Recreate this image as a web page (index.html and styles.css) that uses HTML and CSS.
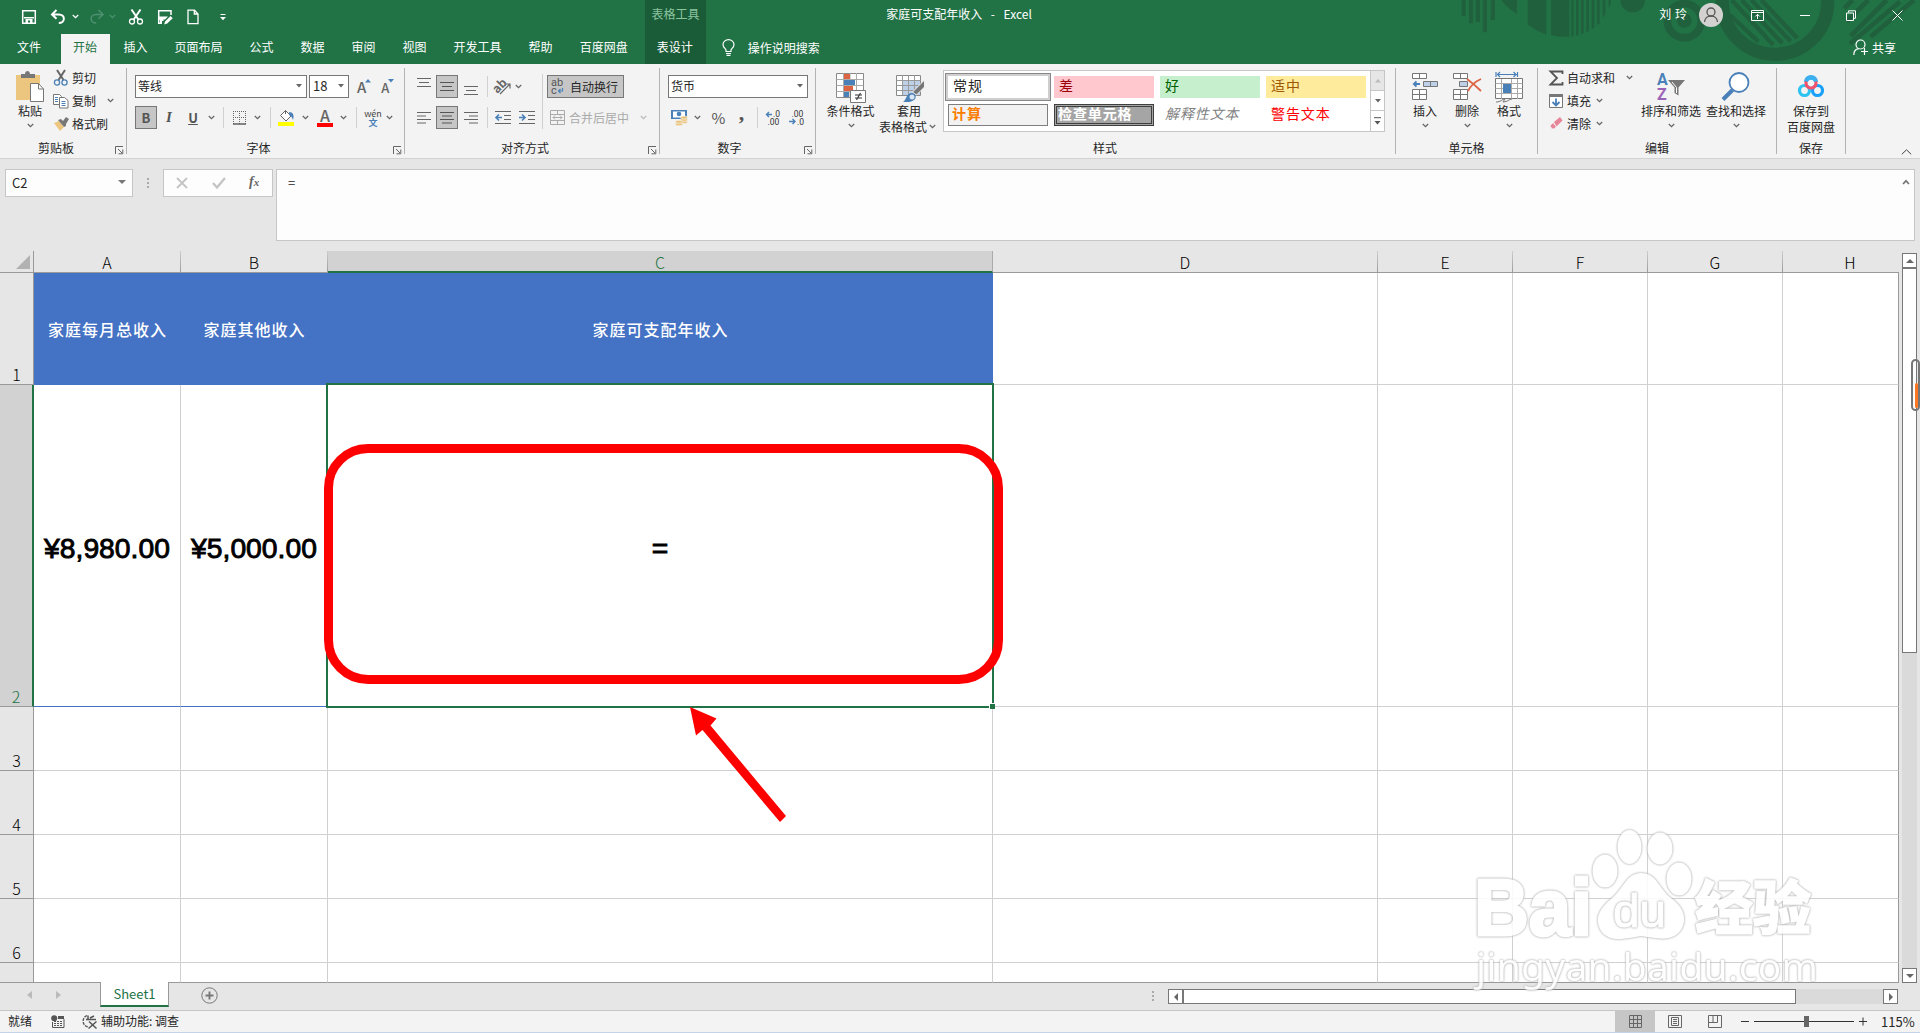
FILE: index.html
```html
<!DOCTYPE html>
<html lang="zh-CN">
<head>
  <meta charset="UTF-8">
  <title>家庭可支配年收入 - Excel</title>
  <link rel="stylesheet" href="styles.css">
</head>
<body>
  <svg class="defs" width="0" height="0">
    <symbol id="chev" viewBox="0 0 7 5"><path d="M.8 1l2.7 2.6L6.2 1" fill="none" stroke="currentColor" stroke-width="1.3"/></symbol>
    <symbol id="tri" viewBox="0 0 6 4"><path d="M0 0h6L3 3.6z" fill="currentColor"/></symbol>
    <symbol id="launch" viewBox="0 0 9 9"><path d="M.5 8V.5H8M3 3l4 4M7.8 3.5v4.3H3.5" fill="none" stroke="#666"/></symbol>
  </svg>

  <header class="top">
    <svg class="deco" width="500" height="64" viewBox="0 0 1500 192" fill="#20603d" stroke="none">
      <path d="M125 0h12v48h-12zM147 0h12v70h-12zM167 0h13v66h-13zM188 0h13v97h-13zM212 0h13v60h-13z"/>
      <path d="M244 0h47v42q-30-18-47-42zM323 0h56v104q-32-12-56-30zM393 0h55v110h-30l-25-4zM454 0h7v108l-7 1zM468 0h8v105l-8 2zM483 0h8v100l-8 3zM499 0h8v93l-8 4zM515 0h8v82l-8 6zM531 0h8v68l-8 8zM548 0h8v42l-8 12zM566 0h7v10l-7 14z"/>
      <circle cx="638" cy="0" r="37"/>
      <circle cx="793" cy="62" r="51" fill="none" stroke="#20603d" stroke-width="23"/>
      <circle cx="793" cy="62" r="22"/>
      <circle cx="1065" cy="5" r="158" fill="none" stroke="#20603d" stroke-width="40"/>
      <path d="M935 0l125 135M965 0l122 130M994 0l118 124M1024 0l108 115M930 45l85 80" stroke="#20603d" stroke-width="13"/>
      <path d="M1298 0l-25 25M1345 0l-65 65M1400 0l-108 108M1440 5l-150 126M1482 0l-130 110" stroke="#20603d" stroke-width="14"/>
    </svg>

    <div class="titlebar">
      <div class="qat">
        <svg width="16" height="16" viewBox="0 0 16 16"><path d="M1.7 1.7h12.6v12.6H1.7z" fill="none" stroke="#fff" stroke-width="1.5"/><path d="M3 8h10v1.6H3zM4.5 10h7v4.5H9v-3H7v3H4.500z" fill="#fff"/></svg>
        <svg width="16" height="16" viewBox="0 0 16 16"><path d="M6.500 1L2 5.500l4.500 4.300M2.300 5.500h6.500c7 0 6.500 8.500 0 8.500" fill="none" stroke="#fff" stroke-width="2"/></svg>
        <svg width="7" height="5"><use href="#chev"/></svg>
        <svg class="dim redo" width="16" height="16" viewBox="0 0 16 16"><path d="M9.500 1L14 5.500l-4.500 4.300M13.700 5.500H7.200c-7 0-6.500 8.500 0 8.500" fill="none" stroke="currentColor" stroke-width="1.500"/></svg>
        <svg class="dim" width="7" height="5"><use href="#chev"/></svg>
        <svg class="cut" width="16" height="16" viewBox="0 0 16 16" fill="none" stroke="#fff"><path d="M3.500.5l6.800 10M12.500.5l-6.800 10" stroke-width="2"/><circle cx="4" cy="12.500" r="2.500" stroke-width="1.300"/><circle cx="12" cy="12.500" r="2.500" stroke-width="1.300"/></svg>
        <svg class="saveas" width="16" height="16" viewBox="0 0 16 16"><path d="M1 1.700h13V6M1.700 1v13.300H5" fill="none" stroke="#fff" stroke-width="1.500"/><path d="M2 7.500h9l-3 3H6.500V12H5v3H3v-4H2zM8 12.500l5.500-5.500 2.200 2.200L10.200 14.500 7.200 15.500z" fill="#fff"/></svg>
        <svg class="newdoc" width="12" height="16" viewBox="0 0 12 16"><path d="M1 1.200h6.500L11 5v9.600H1zM7.300 1.500V5H11" fill="none" stroke="#fff" stroke-width="1.300"/></svg>
        <svg class="more" width="6" height="8" viewBox="0 0 6 8"><path d="M.5 1.500h5" stroke="#fff"/><path d="M0 4h6L3 7.200z" fill="#fff"/></svg>
      </div>
      <div class="ctx-title">表格工具</div>
      <div class="doc-title">家庭可支配年收入&nbsp; -&nbsp; Excel</div>
      <div class="account">
        <span>刘 玲</span>
        <svg width="24" height="24" viewBox="0 0 24 24"><circle cx="12" cy="12" r="12" fill="#d4d2d1"/><circle cx="12" cy="9" r="4" fill="none" stroke="#555" stroke-width="1.300"/><path d="M5.500 19c.5-8 12.500-8 13 0" fill="none" stroke="#555" stroke-width="1.300"/></svg>
        <svg class="w1" width="13" height="11" viewBox="0 0 13 11"><path d="M.5.500h12v10H.5zM.5 2.500h12M6.500 9V4.500M4.300 6.500l2.200-2.200 2.200 2.200" fill="none" stroke="#fff"/></svg>
        <svg class="w2" width="10" height="11"><path d="M0 5.500h10" stroke="#fff"/></svg>
        <svg class="w3" width="10" height="11" viewBox="0 0 10 11"><path d="M.5 3h7v7.500h-7zM2.500 2.500V.8h7v7.500H8" fill="none" stroke="#fff"/></svg>
        <svg class="w4" width="11" height="11"><path d="M.5.500l10 10M10.500.500l-10 10" stroke="#fff"/></svg>
      </div>
    </div>

    <nav class="tabs">
      <a class="file">文件</a>
      <a class="active">开始</a>
      <a>插入</a>
      <a>页面布局</a>
      <a>公式</a>
      <a>数据</a>
      <a>审阅</a>
      <a>视图</a>
      <a>开发工具</a>
      <a>帮助</a>
      <a>百度网盘</a>
      <a class="ctx">表设计</a>
      <a class="tell">
        <svg width="13" height="17" viewBox="0 0 13 17"><path d="M4 12.500v-1.500C3.500 9.500 1 8.500 1 5.500a5.500 4.800 0 0 1 11 0c0 3-2.500 4-3 5.500v1.500zM4 14.500h5M4.500 16.300h4" fill="none" stroke="#fff" stroke-width="1.200"/></svg>
        操作说明搜索
      </a>
      <a class="share">
        <svg width="16" height="17" viewBox="0 0 16 17"><circle cx="7.500" cy="5.500" r="4.500" fill="none" stroke="#fff" stroke-width="1.200"/><path d="M.8 16c0-4 2-6 5-6.300M8 12.500h7M11.500 9v7" fill="none" stroke="#fff" stroke-width="1.200"/></svg>
        共享
      </a>
    </nav>
  </header>

  <section class="ribbon">
    <div class="group clipboard">
      <div class="body">
        <div class="big paste">
          <svg width="30" height="32" viewBox="0 0 30 32"><path d="M1 4h24v25H1z" fill="#ecc67e"/><path d="M6 7V3h4c0-4 5-4 5 0h5v4z" fill="#777"/><path d="M15.500 12.500h8l5 5.500v12.500h-13z" fill="#fff" stroke="#777"/><path d="M23.500 12.500V18h5" fill="none" stroke="#777"/></svg>
          <span>粘贴</span>
          <svg width="7" height="5"><use href="#chev"/></svg>
        </div>
        <div class="lines">
          <div>
            <svg width="16" height="16" viewBox="0 0 16 16" fill="none"><path d="M4 0l6.500 10M12 0L5.500 10" stroke="#666" stroke-width="2"/><circle cx="4" cy="12.500" r="2.600" stroke="#4a80b8" stroke-width="1.300"/><circle cx="11.500" cy="12.500" r="2.600" stroke="#4a80b8" stroke-width="1.300"/></svg>
            剪切
          </div>
          <div>
            <svg width="16" height="16" viewBox="0 0 16 16" fill="#fff" stroke="#777"><path d="M.5 1.500h6l2 2v8h-8z"/><path d="M6.500 4.500h5l3.500 3v7.500H6.500z"/><path d="M2 4.500h3M2 6.500h3M2 8.500h3M8.500 8.500h4M8.500 10.500h4M8.500 12.500h4" stroke="#4a80b8"/></svg>
            复制
            <svg class="far" width="7" height="5"><use href="#chev"/></svg>
          </div>
          <div>
            <svg width="16" height="16" viewBox="0 0 16 16"><path d="M1 7l5-2 5 6-4 4z" fill="#ecc67e"/><path d="M5 4l3-1 2 2 3-4 3 2-3 5v2l-2 1z" fill="#777"/></svg>
            格式刷
          </div>
        </div>
      </div>
      <div class="label">剪贴板<svg width="9" height="9"><use href="#launch"/></svg></div>
    </div>

    <div class="group font">
      <div class="body">
        <div class="row">
          <div class="combo name">等线<svg width="6" height="4"><use href="#tri"/></svg></div>
          <div class="combo size">18<svg width="6" height="4"><use href="#tri"/></svg></div>
          <div class="grow">A<svg width="6" height="4" viewBox="0 0 6 4"><path d="M0 3.500h6L3 0z" fill="#4a80b8"/></svg></div>
          <div class="grow small">A<svg width="6" height="4" viewBox="0 0 6 4"><path d="M0 0h6L3 3.500z" fill="#4a80b8"/></svg></div>
        </div>
        <div class="row tools">
          <b class="on">B</b>
          <i>I</i>
          <u>U</u>
          <svg width="7" height="5"><use href="#chev"/></svg>
          <span class="bar"></span>
          <svg width="14" height="14" viewBox="0 0 14 14"><path d="M.5 0v13M6.500 0v13M12.500 0v13M0 .5h13M0 6.500h13" stroke="#666" stroke-dasharray="1 1"/><path d="M0 13h13" stroke="#555" stroke-width="1.400"/></svg>
          <svg width="7" height="5"><use href="#chev"/></svg>
          <span class="bar"></span>
          <svg width="16" height="17" viewBox="0 0 16 17"><path d="M0 13h16v4H0z" fill="#ff0"/><path d="M2.500 6.500l5-5 5.500 5.500-5 5zM7.500 5V1.500" fill="#fff" stroke="#666"/><path d="M11 3c4 0 5.500 3 4 8-1-3-2-4-3.500-4.500z" fill="#4a80b8"/></svg>
          <svg width="7" height="5"><use href="#chev"/></svg>
          <span class="fcolor">A</span>
          <svg width="7" height="5"><use href="#chev"/></svg>
          <span class="bar"></span>
          <span class="wen">wén<em>文</em></span>
          <svg width="7" height="5"><use href="#chev"/></svg>
        </div>
      </div>
      <div class="label">字体<svg width="9" height="9"><use href="#launch"/></svg></div>
    </div>

    <div class="group align">
      <div class="body">
        <div class="aligns">
          <svg class="up" width="14" height="9" viewBox="0 0 14 9"><path d="M0 .5h14M2 4.500h10M0 8.500h14" stroke="#666"/></svg>
          <span class="on"><svg width="14" height="9" viewBox="0 0 14 9"><path d="M0 .5h14M2 4.500h10M0 8.500h14" stroke="#555"/></svg></span>
          <svg class="down" width="14" height="9" viewBox="0 0 14 9"><path d="M0 .5h14M2 4.500h10M0 8.500h14" stroke="#666"/></svg>
          <span class="bar"></span>
          <svg width="18" height="17" viewBox="0 0 18 17"><text x="-1" y="12" transform="rotate(-45 6 9)" font-size="12" font-weight="600" fill="#666">ab</text><path d="M6 16L16 6M11.500 6H16v4.500" fill="none" stroke="#666" stroke-width="1.200"/></svg>
          <svg width="7" height="5"><use href="#chev"/></svg>

          <svg width="14" height="12" viewBox="0 0 14 12"><path d="M0 .5h14M0 4h9M0 7.500h14M0 11h9" stroke="#666"/></svg>
          <span class="on"><svg width="14" height="12" viewBox="0 0 14 12"><path d="M0 .5h14M2 4h10M0 7.500h14M2 11h10" stroke="#555"/></svg></span>
          <svg width="14" height="12" viewBox="0 0 14 12"><path d="M0 .5h14M5 4h9M0 7.500h14M5 11h9" stroke="#666"/></svg>
          <span class="bar"></span>
          <svg width="16" height="14" viewBox="0 0 16 14"><path d="M0 .5h16M9 4.500h7M9 8.500h7M0 12.500h16" stroke="#666"/><path d="M7 6.500H1M4 3.500l-3 3 3 3" fill="none" stroke="#4a80b8" stroke-width="1.600"/></svg>
          <svg width="16" height="14" viewBox="0 0 16 14"><path d="M0 .5h16M9 4.500h7M9 8.500h7M0 12.500h16" stroke="#666"/><path d="M0 6.500h6M3 3.500l3 3-3 3" fill="none" stroke="#4a80b8" stroke-width="1.600"/></svg>
        </div>
        <span class="bar tall"></span>
        <div class="wraps">
          <div class="on wrap">
            <svg class="glyph" width="14" height="17" viewBox="0 0 14 17"><text x="0" y="7.500" font-size="11" fill="#555">ab</text><text x="0" y="16" font-size="11" fill="#555">c</text><path d="M11.500 10v3H7.500M9.500 11l-2 2 2 2" fill="none" stroke="#4a80b8" stroke-width="1.200"/></svg>
            自动换行
          </div>
          <div class="merge">
            <svg width="15" height="15" viewBox="0 0 15 15"><path d="M.5.500h14v14H.5zM.5 4.500h14M.5 10.500h14M7.500.500v4M7.500 10.500v4M3 7.500h9M5 5.500l-2 2 2 2M10 5.500l2 2-2 2" fill="none" stroke="#aaa"/></svg>
            合并后居中
            <svg class="far" width="7" height="5"><use href="#chev"/></svg>
          </div>
        </div>
      </div>
      <div class="label">对齐方式<svg width="9" height="9"><use href="#launch"/></svg></div>
    </div>

    <div class="group number">
      <div class="body">
        <div class="row"><div class="combo fmt">货币<svg width="6" height="4"><use href="#tri"/></svg></div></div>
        <div class="row tools">
          <svg width="17" height="17" viewBox="0 0 17 17"><path d="M0 1h16v9H0z" fill="#4a80b8"/><path d="M2 2.500h12v6H2z" fill="#fff"/><circle cx="8" cy="5" r="2.300" fill="#4a80b8"/><g fill="#ecc67e" stroke="#f3f3f3" stroke-width=".6"><ellipse cx="13" cy="13" rx="3.600" ry="1.600"/><ellipse cx="13" cy="10.800" rx="3.600" ry="1.600"/><ellipse cx="13" cy="8.600" rx="3.600" ry="1.600"/><ellipse cx="8" cy="15.200" rx="3.600" ry="1.600"/><ellipse cx="8" cy="12.800" rx="3.600" ry="1.600"/></g></svg>
          <svg width="7" height="5"><use href="#chev"/></svg>
          <span class="pct">%</span>
          <span class="comma">,</span>
          <span class="bar"></span>
          <svg class="glyph" width="16" height="14" viewBox="0 0 16 14"><text x="8" y="6" font-size="8.500" fill="#333">.0</text><text x="2.500" y="14" font-size="8.500" fill="#333">.00</text><path d="M7 3.500H1.500M4 1L1.500 3.500 4 6" fill="none" stroke="#4a80b8" stroke-width="1.400"/></svg>
          <svg class="glyph" width="16" height="14" viewBox="0 0 16 14"><text x="2.500" y="6" font-size="8.500" fill="#333">.00</text><text x="8" y="14" font-size="8.500" fill="#333">.0</text><path d="M0 10.500h6M3.500 8L6 10.500 3.500 13" fill="none" stroke="#4a80b8" stroke-width="1.400"/></svg>
        </div>
      </div>
      <div class="label">数字<svg width="9" height="9"><use href="#launch"/></svg></div>
    </div>

    <div class="group styles">
      <div class="body">
        <div class="big cond">
          <svg width="30" height="32" viewBox="0 0 30 32"><path d="M.5 2.500h27v24H.5z" fill="#fff" stroke="#888"/><path d="M.5 8.500h27M.5 14.500h27M.5 20.500h27M7.500 2v24M14 2v24M20.500 2v24" stroke="#aaa" fill="none"/><path d="M8 3h6v5H8zM8 15h9v5H8z" fill="#dc6443"/><path d="M8 9h11v5H8zM8 21h5v5H8z" fill="#4a80b8"/><path d="M14.500 19.500h15v12h-15z" fill="#fff" stroke="#777"/><path d="M19 24h7M19 27h7M24.500 22l-4 7" stroke="#333" stroke-width="1.100"/></svg>
          <span>条件格式</span>
          <svg width="7" height="5"><use href="#chev"/></svg>
        </div>
        <div class="big astable">
          <svg width="30" height="32" viewBox="0 0 30 32"><path d="M1.500 4.500h24v20h-24z" fill="#fff" stroke="#888"/><path d="M8 10h17v14H8z" fill="#bdd0e8"/><path d="M1.500 9.500h24M1.500 14.500h24M1.500 19.500h24M7.500 4v20M13.500 4v20M19.500 4v20" stroke="#999" fill="none"/><path d="M29.500 9v7l-8 8-4-3z" fill="#777" stroke="#f3f3f3"/><path d="M8 31c3-1 3-9 9-9 4 0 5 5 2 7-3 2.500-7 2-11 2z" fill="#4a80b8"/><circle cx="17" cy="26" r="2.500" fill="#fff" opacity=".8"/></svg>
          <span>套用</span>
          <span class="second">表格格式 <svg width="7" height="5"><use href="#chev"/></svg></span>
        </div>
        <div class="gallery">
          <div class="cells">
            <div class="normal">常规</div>
            <div class="bad">差</div>
            <div class="good">好</div>
            <div class="neutral">适中</div>
            <div class="calc">计算</div>
            <div class="check">检查单元格</div>
            <div class="explain">解释性文本</div>
            <div class="warn">警告文本</div>
          </div>
          <div class="scroll">
            <span class="off"><svg width="6" height="4" viewBox="0 0 6 4"><path d="M0 3.500h6L3 0z" fill="#bbb"/></svg></span>
            <span><svg width="6" height="4"><use href="#tri"/></svg></span>
            <span><svg width="7" height="8" viewBox="0 0 7 8"><path d="M0 .7h7" stroke="#555"/><path d="M.5 4h6l-3 3.500z" fill="#555"/></svg></span>
          </div>
        </div>
      </div>
      <div class="label">样式</div>
    </div>

    <div class="group cellgrp">
      <div class="body">
        <div class="big">
          <svg width="28" height="32" viewBox="0 0 28 32"><path d="M1.500 2.500h14v5h-14zM8.500 2.500v5M1.500 18.500h14v10h-14zM8.500 18.500v10M1.500 23.500h14" fill="#fff" stroke="#777"/><path d="M12.500 10.500h14v5h-14zM19.500 10.500v5" fill="#bdd0e8" stroke="#777"/><path d="M9 13H3M5.500 10.300L2.800 13l2.700 2.700" fill="none" stroke="#4a80b8" stroke-width="1.800"/></svg>
          <span>插入</span>
          <svg width="7" height="5"><use href="#chev"/></svg>
        </div>
        <div class="big">
          <svg width="30" height="32" viewBox="0 0 30 32"><path d="M1.500 2.500h14v5h-14zM8.500 2.500v5M1.500 18.500h14v10h-14zM8.500 18.500v10M1.500 23.500h14" fill="#fff" stroke="#777"/><path d="M7.500 10.500h8v5h-8z" fill="#bdd0e8" stroke="#777"/><path d="M15 8q8 6 14 12M29 8Q20 12 16 20" fill="none" stroke="#dc6443" stroke-width="1.800"/></svg>
          <span>删除</span>
          <svg width="7" height="5"><use href="#chev"/></svg>
        </div>
        <div class="big">
          <svg width="28" height="32" viewBox="0 0 28 32"><path d="M1 1v5M22.500 1v5M2 3.500h20M5 1L2.500 3.500 5 6M18.500 1L21 3.500 18.500 6" fill="none" stroke="#4a80b8" stroke-width="1.200"/><path d="M.5 7.500h27v20H.5z" fill="#fff" stroke="#777"/><path d="M.5 12.500h27M.5 22.500h27M6.500 8v20M16.500 8v20M22.500 8v20M.5 17.500h27" stroke="#aaa"/><path d="M8 13h8v9H8z" fill="#4a80b8"/><path d="M1 31c5 0 6-3 9-3l-2 3c5 0 6-3 9-3" fill="none" stroke="#777"/></svg>
          <span>格式</span>
          <svg width="7" height="5"><use href="#chev"/></svg>
        </div>
      </div>
      <div class="label">单元格</div>
    </div>

    <div class="group edit">
      <div class="body">
        <div class="lines">
          <div>
            <svg width="16" height="16" viewBox="0 0 16 16"><path d="M14.500 4V1.500H2.500L9 8l-6.500 6.500h12V12" fill="none" stroke="#555" stroke-width="1.800"/></svg>
            自动求和
            <svg class="far" width="7" height="5"><use href="#chev"/></svg>
          </div>
          <div>
            <svg width="16" height="16" viewBox="0 0 16 16"><path d="M1.500 1.500h13v13h-13z" fill="#fff" stroke="#777"/><path d="M1 1h14v3H1z" fill="#777"/><path d="M8 5.500v7M4.500 9L8 12.500 11.500 9" fill="none" stroke="#4a80b8" stroke-width="1.800"/></svg>
            填充
            <svg class="near" width="7" height="5"><use href="#chev"/></svg>
          </div>
          <div>
            <svg width="16" height="16" viewBox="0 0 16 16"><path d="M6 6l6-5 2.500 3.500-6 6z" fill="#e8849a"/><path d="M5.200 6.800l3 4-2 2H4l-2-3z" fill="#e8849a" stroke="#f3f3f3" stroke-width=".6"/></svg>
            清除
            <svg class="near" width="7" height="5"><use href="#chev"/></svg>
          </div>
        </div>
        <div class="big sort">
          <svg class="glyph" width="30" height="32" viewBox="0 0 30 32"><text x="1" y="14" font-size="16" font-weight="700" fill="#4a80b8">A</text><text x="1" y="28.500" font-size="16" font-weight="700" fill="#9b63b8">Z</text><path d="M12 9h17l-6.500 7.500v8l-4-2.500v-5.500z" fill="#777"/><path d="M16 11l4.500 5.500v5.500" stroke="#fff" fill="none"/></svg>
          <span>排序和筛选</span>
          <svg width="7" height="5"><use href="#chev"/></svg>
        </div>
        <div class="big find">
          <svg width="30" height="32" viewBox="0 0 30 32"><path d="M11.500 19L2 28.500" stroke="#4a80b8" stroke-width="4"/><circle cx="18" cy="11.500" r="9.500" fill="#fff" stroke="#4a80b8" stroke-width="1.800"/></svg>
          <span>查找和选择</span>
          <svg width="7" height="5"><use href="#chev"/></svg>
        </div>
      </div>
      <div class="label">编辑</div>
    </div>

    <div class="group save">
      <div class="body">
        <div class="big">
          <svg width="30" height="32" viewBox="0 0 30 32" fill="none" stroke-width="3.200"><circle cx="8.500" cy="19.500" r="5" stroke="#2cc3f0"/><circle cx="21.500" cy="19.500" r="5" stroke="#18a0fb"/><path d="M9.500 11a5.500 5.500 0 0 1 11 0" stroke="#33b4f5"/><circle cx="15" cy="12" r="5" stroke="#f4516c"/><path d="M10.300 10.500a5 5 0 0 1 9.400 0" stroke="#33b4f5"/></svg>
          <span>保存到</span>
          <span class="second">百度网盘</span>
        </div>
      </div>
      <div class="label">保存</div>
    </div>
    <svg class="collapse" width="11" height="6" viewBox="0 0 11 6"><path d="M.8 5.300L5.500.800l4.700 4.500" fill="none" stroke="#444"/></svg>
  </section>

  <section class="formula">
    <div class="namebox">C2<svg width="8" height="4" viewBox="0 0 8 4"><path d="M0 0h8L4 4z" fill="#777"/></svg></div>
    <div class="dots"><i></i><i></i><i></i></div>
    <div class="fx">
      <svg width="12" height="12" viewBox="0 0 12 12"><path d="M1 1l10 10M11 1L1 11" stroke="#c4c4c4" stroke-width="1.800"/></svg>
      <svg width="14" height="12" viewBox="0 0 14 12"><path d="M1 6l4 4.500L13 1" fill="none" stroke="#c4c4c4" stroke-width="2.300"/></svg>
      <span>f<small>x</small></span>
    </div>
    <div class="input">=<svg width="8" height="6" viewBox="0 0 8 6"><path d="M1 5l3-3.200L7 5" fill="none" stroke="#777" stroke-width="1.700"/></svg></div>
  </section>

  <main class="sheet">
    <div class="grid">
      <div class="corner"><svg width="14" height="14"><path d="M14 0v14H0z" fill="#b2b2b2"/></svg></div>
      <div class="ch">A</div><div class="ch">B</div><div class="ch sel">C</div><div class="ch">D</div><div class="ch">E</div><div class="ch">F</div><div class="ch">G</div><div class="ch last">H</div>

      <div class="rh">1</div><div class="th">家庭每月总收入</div><div class="th">家庭其他收入</div><div class="th">家庭可支配年收入</div><div></div><div></div><div></div><div></div><div class="edge"></div>

      <div class="rh sel">2</div><div class="money">¥8,980.00</div><div class="money">¥5,000.00</div>
      <div class="active-cell">=
        <span class="outline"></span><span class="handle"></span>
        <span class="mark"></span>
        <svg class="arrow" width="100" height="120" viewBox="0 0 100 120"><path d="M1 1L27.500 12.500 21.500 19.500 97 110l-6 6L13.500 24 7 29.500z" fill="#f00"/></svg>
      </div>
      <div></div><div></div><div></div><div></div><div class="edge"></div>

      <div class="rh">3</div><div></div><div></div><div></div><div></div><div></div><div></div><div></div><div class="edge"></div>
      <div class="rh">4</div><div></div><div></div><div></div><div></div><div></div><div></div><div></div><div class="edge"></div>
      <div class="rh">5</div><div></div><div></div><div></div><div></div><div></div><div></div><div></div><div class="edge"></div>
      <div class="rh">6</div><div></div><div></div><div></div><div></div><div></div><div></div><div></div><div class="edge"></div>
      <div class="rh cut-row"></div><div class="cut-row"></div><div class="cut-row"></div><div class="cut-row"></div><div class="cut-row"></div><div class="cut-row"></div><div class="cut-row"></div><div class="cut-row"></div><div class="edge cut-row"></div>
    </div>
    <div class="vscroll">
      <span class="btn"><svg width="8" height="4" viewBox="0 0 8 4"><path d="M0 4h8L4 0z" fill="#666"/></svg></span>
      <span class="thumb"></span>
      <span class="btn"><svg width="8" height="4" viewBox="0 0 8 4"><path d="M0 0h8L4 4z" fill="#666"/></svg></span>
    </div>
    <span class="side-pill"></span>
  </main>

  <footer class="sheetbar">
    <svg class="prev" width="5" height="8"><path d="M5 0v8L0 4z" fill="#bbb"/></svg>
    <svg class="next" width="5" height="8"><path d="M0 0v8l5-4z" fill="#bbb"/></svg>
    <div class="sheet-tab">Sheet1</div>
    <svg class="add" width="17" height="17" viewBox="0 0 17 17"><circle cx="8.500" cy="8.500" r="7.700" fill="none" stroke="#777"/><path d="M8.500 4.500v8M4.500 8.500h8" stroke="#777" stroke-width="1.900"/></svg>
    <div class="dots"><i></i><i></i><i></i></div>
    <div class="hscroll">
      <span class="btn"><svg width="4" height="8"><path d="M4 0v8L0 4z" fill="#666"/></svg></span>
      <span class="thumb"></span>
      <span class="btn"><svg width="4" height="8"><path d="M0 0v8l4-4z" fill="#666"/></svg></span>
    </div>
  </footer>

  <footer class="status">
    <span class="ready">就绪</span>
    <svg class="macro" width="14" height="13" viewBox="0 0 14 13"><circle cx="3.200" cy="3.200" r="3" fill="#555"/><path d="M1.500 7v5.500h11.500V4" fill="none" stroke="#555"/><path d="M7 1h6v3H7z" fill="#555"/><path d="M3 6.500h9M3 8.500h9M3 10.500h9" stroke="#555" stroke-dasharray="2 1"/></svg>
    <svg class="acc" width="17" height="15" viewBox="0 0 17 15"><path d="M6 1.500A6 6 0 0 0 7 13" fill="none" stroke="#555" stroke-width="1.300" stroke-dasharray="3 1"/><path d="M7 1.500v4M5 5.500h10M9 4l4-2M8 7.500l7.500 7M15.500 7.500l-8 7" fill="none" stroke="#555" stroke-width="1.500"/></svg>
    <span>辅助功能: 调查</span>
    <div class="right">
      <span class="view on"><svg width="13" height="13" viewBox="0 0 13 13"><path d="M.5.500h12v12H.5zM4.500 0v13M8.500 0v13M0 4.500h13M0 8.500h13" fill="none" stroke="#666"/></svg></span>
      <span class="view"><svg width="14" height="13" viewBox="0 0 14 13"><path d="M.5.500h13v12H.5zM3.500 2.500h7v8h-7zM5 4.500h4M5 6.500h4M5 8.500h4" fill="none" stroke="#666"/></svg></span>
      <span class="view"><svg width="14" height="13" viewBox="0 0 14 13"><path d="M.5.500h13v12H.5zM.5 7.500h9V.500M5 .500v7" fill="none" stroke="#666"/></svg></span>
      <svg class="minus" width="8" height="9"><path d="M0 4.500h8" stroke="#333"/></svg>
      <div class="slider"><span></span></div>
      <svg class="plus" width="8" height="9"><path d="M0 4.500h8M4 .5v8" stroke="#333"/></svg>
      <span class="zoom">115%</span>
    </div>
  </footer>

  <svg class="watermark" width="380" height="190" viewBox="0 0 380 190">
    <text x="14" y="115" font-size="79" textLength="118" lengthAdjust="spacingAndGlyphs" class="latin">Bai</text>
    <ellipse cx="145" cy="51" rx="12.500" ry="16.500"/>
    <ellipse cx="169.500" cy="27" rx="12" ry="17"/>
    <ellipse cx="200" cy="28.500" rx="12.500" ry="16"/>
    <ellipse cx="219" cy="59" rx="12.500" ry="16.500"/>
    <path d="M181 53c16 0 18 16 30 25 14 10 16 22 10 32-10 14-28 7-40 6-14 2-30 8-40-5-7-12-2-22 10-32 12-9 15-26 30-26z"/>
    <text x="153" y="107" font-size="47" textLength="53" lengthAdjust="spacingAndGlyphs" class="du">du</text>
    <text x="235" y="109" font-size="58" textLength="116" class="cjk">经验</text>
    <text x="16" y="161" font-size="39" textLength="342" class="url">jingyan.baidu.com</text>
  </svg>
</body>
</html>
```

FILE: styles.css
```css
* { box-sizing: border-box; }
body {
  margin: 0;
  width: 1920px;
  height: 1033px;
  overflow: hidden;
  position: relative;
  display: flex;
  flex-direction: column;
  font: 12px/16px "Noto Sans CJK SC", sans-serif;
  color: #262626;
  background: #e6e6e6;
}
svg { display: block; flex: none; overflow: visible; }
.defs { position: absolute; }
.glyph text { font-family: Roboto, sans-serif; }

/* title bar + tabs */
.top { position: relative; height: 64px; background: #217346; color: #fff; }
.deco { position: absolute; right: 0; top: 0; overflow: hidden; }
.titlebar { position: relative; display: flex; height: 34px; }
.qat { display: flex; align-items: center; width: 645px; height: 33px; padding-left: 21px; }
.qat svg:nth-child(2) { margin-left: 13px; }
.qat svg:nth-child(3) { margin-left: 6px; }
.qat .redo { margin-left: 10px; }
.qat .redo + svg { margin-left: 4px; }
.qat .cut { margin-left: 12px; }
.qat .saveas { margin-left: 13px; }
.qat .newdoc { margin-left: 14px; }
.qat .more { margin-left: 21px; }
.dim { color: #4e9070; }
.ctx-title { width: 61px; background: #1b5c38; color: #8cc4a0; text-align: center; line-height: 28px; }
.doc-title { width: 506px; text-align: center; line-height: 28px; word-spacing: 1.6px; }
.account { display: flex; align-items: center; height: 30px; margin-left: auto; line-height: 14px; }
.account span { margin: -2px 12px 0 0; word-spacing: 1px; }
.w1 { margin-left: 28px; }
.w2 { margin-left: 36px; }
.w3 { margin-left: 36px; }
.w4 { margin-left: 36px; margin-right: 17px; }

.tabs { position: relative; display: flex; height: 30px; line-height: 26px; }
.tabs a { padding: 0 13.500px; }
.tabs .file { width: 61px; padding-left: 17px; }
.tabs .active { width: 49px; padding: 0 12px; background: #f3f3f3; color: #217346; }
.tabs .ctx { width: 61px; margin-left: 3.500px; padding: 0 12px; background: #1b5c38; }
.tabs .tell { display: flex; align-items: center; gap: 13px; height: 27px; padding: 0 0 0 16px; }
.tabs .share { display: flex; align-items: center; gap: 3px; height: 27px; margin-left: auto; padding: 0 24px 0 0; }

/* ribbon */
.ribbon { position: relative; display: flex; height: 95px; background: #f3f3f3; border-bottom: 1px solid #d2d2d2; color: #262626; }
.group { position: relative; height: 94px; }
.group::after { content: ""; position: absolute; right: 0; top: 4px; width: 1px; height: 86px; background: #b3b3b3; }
.body { display: flex; height: 75px; }
.body svg { color: #666; }
.label { display: flex; justify-content: center; line-height: 17px; padding-right: 15px; }
.label svg { position: absolute; right: 3px; bottom: 3px; }
.clipboard { width: 127px; }
.font { width: 278px; }
.align { width: 255px; }
.number { width: 156px; }
.number .label { padding-right: 17px; }
.styles { width: 580px; }
.styles .label { padding-right: 2px; }
.cellgrp { width: 142px; }
.cellgrp .label, .edit .label, .save .label { padding-right: 1px; }
.edit { width: 239px; }
.save { width: 69px; }

.big { display: flex; flex-direction: column; align-items: center; padding-top: 7px; white-space: nowrap; line-height: 15px; }
.big svg:first-child + span { margin-top: 0; }
.big span + svg { margin-top: 5px; }
.second { display: flex; align-items: center; }
.big .second { margin-top: 1px; }
.second svg { margin-left: 5px; }
.paste { margin-left: 16px; width: 28px; }
.lines div { display: flex; align-items: center; height: 23px; white-space: nowrap; line-height: 14px; }
.lines svg:first-child { margin-right: 3px; }
.clipboard .lines { margin: 2px 0 0 9px; }
.lines .far { margin-left: 11px; }
.lines .near { margin-left: 5px; }

.font .body, .number .body { flex-direction: column; padding-left: 8px; }
.row { display: flex; height: 23px; margin-top: 11px; }
.row + .row { margin-top: 8px; }
.combo { display: flex; justify-content: space-between; align-items: center; height: 23px; padding: 0 4px 1px 2px; background: #fff; border: 1px solid #777; }
.combo.name { width: 172px; }
.combo.size { width: 40px; margin-left: 2px; font-size: 13px; padding-left: 3px; }
.combo.fmt { width: 140px; }
.grow { display: flex; margin-left: 8px; font-size: 15px; font-weight: 500; line-height: 23px; color: #666; }
.grow svg { margin: 4px 0 0 -1px; }
.grow.small { margin-left: 10px; font-size: 13px; line-height: 25px; }
.tools { display: grid; align-items: center; justify-items: center; }
.font .tools { grid-template-columns: 22px 24px 24px 13px 11px 21px 15px 10px 22px 16px 24px 13px 12px 22px 11px; }
.on { display: flex; align-items: center; justify-content: center; width: 22px; height: 23px; background: #c6c6c6; border: 1px solid #777; }
.tools b { font-size: 13px; color: #555; }
.tools i { font: italic bold 15px "Liberation Serif", serif; color: #555; }
.tools u { font-size: 13px; font-weight: 700; color: #555; }
.bar { width: 1px; height: 21px; background: #d0d0d0; }
.fcolor { height: 19px; width: 16px; border-bottom: 4px solid #f00; text-align: center; font-size: 16px; font-weight: 500; line-height: 14px; color: #666; }
.wen { font-size: 9px; line-height: 9px; text-align: center; color: #444; }
.wen em { display: block; font-style: normal; font-weight: 700; color: #4a80b8; }

.aligns { display: grid; align-content: start; align-items: center; justify-items: center; margin-top: 11px; margin-left: 7px; grid-template: 23px 23px / 23px 24px 24px 8px 24px 24px; row-gap: 8px; width: 127px; }
.aligns .up { margin-bottom: 8px; }
.aligns .down { margin-top: 8px; }
.aligns svg + svg:nth-child(6) { justify-self: start; }
.bar.tall { height: 55px; margin: 10px 4px 0 3px; }
.wraps { white-space: nowrap; padding-top: 11px; line-height: 14px; }
.wrap { width: 77px; gap: 5px; padding-right: 2px; }
.merge { display: flex; align-items: center; gap: 4px; height: 23px; margin: 8px 0 0 3px; color: #aaa; }
.merge .far { margin-left: 7px; color: #bbb; }

.number .tools { grid-template-columns: 22px 14px 29px 17px 14px 17px 31px; }
.pct { font-size: 15px; color: #555; }
.comma { font: bold 22px/10px "Liberation Serif", serif; color: #555; margin-top: -9px; }

.cond { margin-left: 11px; width: 48px; }
.cond span { margin-left: -1px; }
.astable { margin-left: 4px; width: 60px; }
.astable svg:first-child { margin-left: 2px; }
.astable > span { align-self: flex-start; margin-left: 18px; }
.astable .second { margin-left: 0; }
.gallery { display: flex; width: 442px; height: 62px; margin: 6px 0 0 4px; border: 1px solid #c6c6c6; background: #fff; }
.cells { display: grid; grid-template: 22px 22px / repeat(4, 100px); gap: 6px; padding: 5px 4px; width: 426px; font-size: 14px; letter-spacing: .9px; line-height: 19px; }
.cells div { padding-left: 5px; white-space: nowrap; }
.normal { outline: 2px solid #d0cece; box-shadow: 0 0 0 3px #888; }
.bad { background: #ffc7ce; color: #9c0006; }
.good { background: #c6efce; color: #006100; }
.neutral { background: #ffeb9c; color: #9c5700; }
.calc { background: #f2f2f2; border: 1px solid #7f7f7f; color: #fa7d00; font-weight: 700; line-height: 17px; }
.cells .calc { padding-left: 3px; }
.check { background: #a5a5a5; border: 3px double #3f3f3f; color: #fff; font-weight: 700; line-height: 13px; }
.cells .check { padding-left: 1px; }
.explain { color: #7f7f7f; font-style: italic; }
.warn { color: #f00; }
.scroll { width: 14px; border-left: 1px solid #c6c6c6; }
.scroll span { display: flex; align-items: center; justify-content: center; height: 20px; border-bottom: 1px solid #c6c6c6; }
.scroll span:last-child { border: 0; }
.scroll .off { background: #e6e6e6; }

.cellgrp .body { padding-left: 8px; }
.cellgrp .big { width: 42px; }
.edit .lines { margin: 2px 0 0 9px; width: 93px; }
.sort { width: 60px; }
.find { width: 60px; margin-left: 5px; }
.edit .body { padding-left: 1px; }
.save .body { justify-content: center; padding-right: 1px; }
.collapse { position: absolute; right: 8px; bottom: 3px; }

/* formula bar */
.formula { display: flex; height: 92px; padding: 10px 0 0 5px; }
.formula > div { font-size: 13px; }
.namebox { display: flex; justify-content: space-between; align-items: center; width: 128px; height: 28px; padding: 0 6px; background: #fdfdfd; border: 1px solid #c6c6c6; }
.namebox svg { margin-top: -3px; }
.dots { display: flex; flex-direction: column; gap: 2px; margin: 9px 0 0 14px; }
.dots i { width: 2px; height: 2px; background: #aaa; }
.fx { display: flex; align-items: center; width: 110px; height: 28px; margin-left: 14px; padding-left: 12px; background: #fdfdfd; border: 1px solid #c6c6c6; }
.fx svg + svg { margin-left: 24px; }
.fx span { margin: -2px 0 0 23px; font: italic bold 14px/16px "Liberation Serif", serif; color: #666; }
.fx small { font-size: 11px; }
.input { display: flex; justify-content: space-between; width: 1639px; height: 72px; margin-left: 3px; padding: 5px 4px 0 11px; background: #fdfdfd; border: 1px solid #c6c6c6; }
.input svg { margin-top: 4px; }

/* sheet */
.sheet { position: relative; display: flex; height: 732px; }
.grid { display: grid; width: 1899px; grid-template: 22px 112px 322px repeat(4, 64px) 20px / 34px 147px 147px 665px 385px 135px 135px 135px 116px; }
.grid > div { background: #fff; border-right: 1px solid #d0d0d0; border-bottom: 1px solid #d0d0d0; }
.grid > .corner { background: #e6e6e6; border-color: #999; padding: 4px 0 0 16px; }
.grid > .ch { background: #e6e6e6; border-right: 1px solid; border-image: linear-gradient(#d0d0d0, #999) 1; border-bottom: 1px solid #999; text-align: center; font-size: 16px; font-weight: 300; line-height: 22px; color: #000; }
.grid > .ch.sel { background: #d2d2d2; border-image: none; border-right-color: #aaa; border-bottom: 2px solid #217346; color: #217346; }
.grid > .last { padding-left: 18px; border-right: 0; }
.grid > .rh { display: flex; align-items: flex-end; justify-content: center; background: #e6e6e6; border-color: #999; font-size: 16px; font-weight: 300; line-height: 20px; color: #000; }
.grid > .rh.sel { background: #d2d2d2; border-right: 2px solid #217346; color: #217346; }
.grid > .edge { border-right-color: #999; }
.grid > .cut-row { border-bottom-color: #999; }
.grid > .th { display: flex; align-items: center; justify-content: center; background: #4472c4; border-color: #4472c4; color: #fff; font-size: 16px; font-weight: 500; letter-spacing: 1px; padding-left: 1px; }
.grid > .money, .grid > .active-cell {
  display: flex;
  align-items: center;
  justify-content: center;
  padding-top: 6px;
  font: 28.300px "Liberation Sans", sans-serif;
  color: #000;
  -webkit-text-stroke: .9px #000;
}
.grid > .money { border-bottom-color: #4472c4; }
.grid > .active-cell { position: relative; }
.outline { position: absolute; inset: -2px; border: 2px solid #217346; }
.handle { position: absolute; right: -3px; bottom: -3px; width: 6px; height: 6px; background: #217346; border: solid #fff; border-width: 1px 0 0 1px; }
.mark { position: absolute; left: -4px; top: 59px; width: 679px; height: 240px; border: 9px solid #f00; border-radius: 44px; z-index: 2; }
.arrow { position: absolute; left: 361px; top: 321px; z-index: 2; }

.btn { display: flex; align-items: center; justify-content: center; width: 15px; height: 15px; background: #fff; border: 1px solid #777; }
.btn:last-child { margin-top: auto; }
.thumb { background: #fff; border: 1px solid #777; }
.vscroll { display: flex; flex-direction: column; width: 15px; height: 730px; margin: 2px 0 0 3px; background: #dadada; }
.vscroll .thumb { height: 385px; }
.side-pill { position: absolute; right: 0; top: 108px; width: 9px; height: 52px; border: 2px solid #777; border-radius: 5px; }
.side-pill::after { content: ""; position: absolute; right: 0; bottom: 1px; width: 3px; height: 25px; border-radius: 2px; background: #fd7622; }

/* sheet tabs + status */
.sheetbar { display: flex; height: 27px; }
.prev { margin: 8px 0 0 27px; }
.next { margin: 8px 0 0 24px; }
.sheet-tab { width: 69px; height: 25px; margin: -1px 0 0 39px; background: #fff; border: solid #999; border-width: 0 1px; border-bottom: 2px solid #217346; text-align: center; font-size: 13px; line-height: 24px; color: #217346; z-index: 1; }
.add { margin: 4px 0 0 32px; }
.sheetbar .dots { margin: 8px 0 0 934px; }
.hscroll { display: flex; width: 730px; height: 15px; margin: 6px 0 0 14px; background: #dadada; }
.hscroll .thumb { width: 613px; }
.hscroll .btn:last-child { margin: 0 0 0 auto; }
.status { display: flex; align-items: center; height: 23px; padding-left: 8px; background: #f3f3f3; border-top: 1px solid #c6c6c6; border-bottom: 1px solid #c5d3e8; line-height: 14px; }
.status > span { margin-top: -2px; }
.macro { margin-left: 19px; }
.acc { margin: 0 3px 0 16px; }
.right { display: flex; align-items: center; margin-left: auto; height: 21px; }
.view { display: flex; align-items: center; justify-content: center; width: 40px; height: 21px; }
.view.on { border: 0; background: #c6c6c6; }
.minus { margin-left: 6px; }
.slider { width: 100px; height: 11px; margin: 0 5px; padding-left: 50px; background: linear-gradient(#333, #333) 0 5px / 100% 1px no-repeat; }
.slider span { display: block; width: 5px; height: 11px; background: #666; }
.zoom { width: 32px; margin: 0 7px 0 14px; font-size: 13px; }

.watermark { position: absolute; left: 1460px; top: 820px; z-index: 5; opacity: .88; fill: #fff; }
.watermark > * { filter: drop-shadow(0 0 1px #aaa) drop-shadow(0 0 .6px #ccc); }
.watermark .latin { font-family: "Liberation Sans", sans-serif; font-weight: 700; stroke: #fff; stroke-width: 3px; }
.watermark .du { font-family: "Liberation Sans", sans-serif; stroke: #fff; stroke-width: 1px; }
.watermark .cjk { font-weight: 900; stroke: #fff; stroke-width: 1.500px; }
.watermark .url { font-family: "Noto Sans", sans-serif; }
```
